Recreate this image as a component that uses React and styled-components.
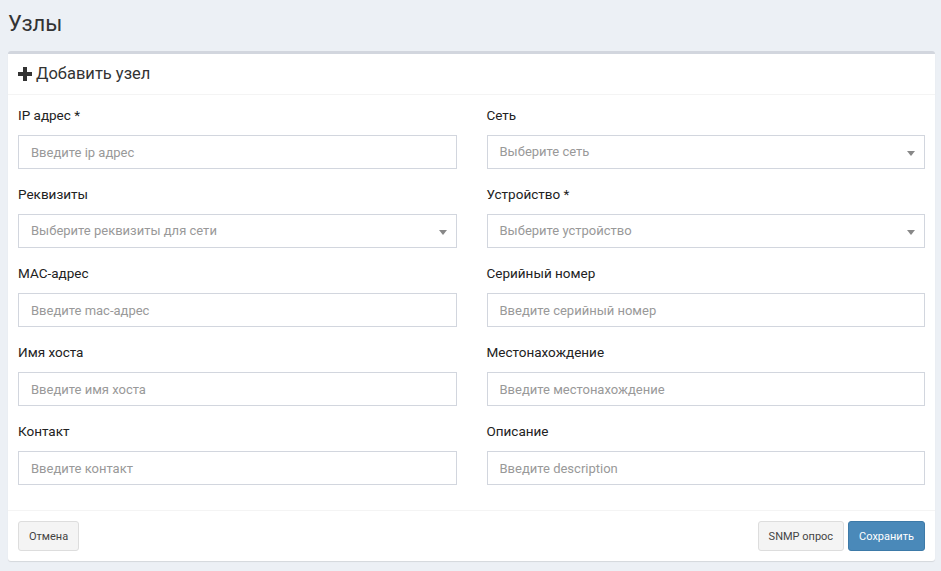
import React from "react";
import styled, { createGlobalStyle } from "styled-components";

const GlobalStyle = createGlobalStyle`
  * { box-sizing: border-box; }
  body {
    margin: 0;
    background: #ecf0f5;
    font-family: Roboto, "Noto Sans", Arial, sans-serif;
    color: #333;
  }
`;

const Page = styled.div`
  padding: 0 6px 0 8px;
  min-height: 571px;
`;

const Title = styled.h1`
  margin: 0;
  padding-top: 11px;
  height: 51px;
  font-size: 22px;
  font-weight: 400;
  line-height: 26px;
  color: #333;
`;

const Box = styled.div`
  background: #fff;
  border-top: 3px solid #d2d6de;
  border-radius: 3px;
  box-shadow: 0 1px 1px rgba(0, 0, 0, 0.1);
`;

const BoxHeader = styled.div`
  display: flex;
  align-items: center;
  gap: 4px;
  padding: 10px;
  height: 41px;
  border-bottom: 1px solid #f4f4f4;
`;

const BoxTitle = styled.h3`
  margin: 0;
  font-size: 16.5px;
  font-weight: 400;
  line-height: 20px;
  color: #333;
`;

const BoxBody = styled.div`
  padding: 10px;
  display: grid;
  grid-template-columns: 1fr 1fr;
  column-gap: 30px;
`;

const FormGroup = styled.div`
  margin-bottom: 15px;
`;

const Label = styled.label`
  display: block;
  font-size: 13.5px;
  font-weight: 400;
  line-height: 20px;
  margin-bottom: 10px;
  color: #222;
`;

const Input = styled.input`
  display: block;
  width: 100%;
  height: 34px;
  padding: 6px 12px;
  border: 1px solid #d2d6de;
  border-radius: 0;
  font-family: inherit;
  font-size: 13px;
  color: #555;
  outline: none;
  &::placeholder { color: #999; }
`;

const Select = styled.div`
  position: relative;
  height: 34px;
  padding: 6px 12px;
  border: 1px solid #d2d6de;
  font-size: 13px;
  line-height: 20px;
  color: #999;
`;

const Arrow = styled.span`
  position: absolute;
  right: 9px;
  top: 15px;
  border-left: 4.5px solid transparent;
  border-right: 4.5px solid transparent;
  border-top: 5px solid #888;
`;

const BoxFooter = styled.div`
  display: flex;
  gap: 4px;
  padding: 10px;
  border-top: 1px solid #f4f4f4;
`;

const Spacer = styled.div`
  flex: 1;
`;

const Button = styled.button`
  height: 30px;
  padding: 0 10px;
  font-family: inherit;
  font-size: 11px;
  border-radius: 3px;
  border: 1px solid ${(p) => (p.$primary ? "#3d7aa8" : "#ddd")};
  background: ${(p) => (p.$primary ? "#4a89b9" : "#f4f4f4")};
  color: ${(p) => (p.$primary ? "#fff" : "#444")};
  cursor: pointer;
`;

const PlusIcon = () => (
  <svg width="14" height="14" viewBox="0 0 14 14">
    <path d="M5 0h4v5h5v4H9v5H5V9H0V5h5z" fill="#333" />
  </svg>
);

const fields = [
  { label: "IP адрес *", placeholder: "Введите ip адрес" },
  { label: "Сеть", placeholder: "Выберите сеть", select: true },
  { label: "Реквизиты", placeholder: "Выберите реквизиты для сети", select: true },
  { label: "Устройство *", placeholder: "Выберите устройство", select: true },
  { label: "MAC-адрес", placeholder: "Введите mac-адрес" },
  { label: "Серийный номер", placeholder: "Введите серийный номер" },
  { label: "Имя хоста", placeholder: "Введите имя хоста" },
  { label: "Местонахождение", placeholder: "Введите местонахождение" },
  { label: "Контакт", placeholder: "Введите контакт" },
  { label: "Описание", placeholder: "Введите description" },
];

export default function App() {
  return (
    <Page>
      <GlobalStyle />
      <Title>Узлы</Title>
      <Box>
        <BoxHeader>
          <PlusIcon />
          <BoxTitle>Добавить узел</BoxTitle>
        </BoxHeader>
        <BoxBody>
          {fields.map((f) => (
            <FormGroup key={f.label}>
              <Label>{f.label}</Label>
              {f.select ? (
                <Select>
                  {f.placeholder}
                  <Arrow />
                </Select>
              ) : (
                <Input placeholder={f.placeholder} />
              )}
            </FormGroup>
          ))}
        </BoxBody>
        <BoxFooter>
          <Button>Отмена</Button>
          <Spacer />
          <Button>SNMP опрос</Button>
          <Button $primary>Сохранить</Button>
        </BoxFooter>
      </Box>
    </Page>
  );
}
